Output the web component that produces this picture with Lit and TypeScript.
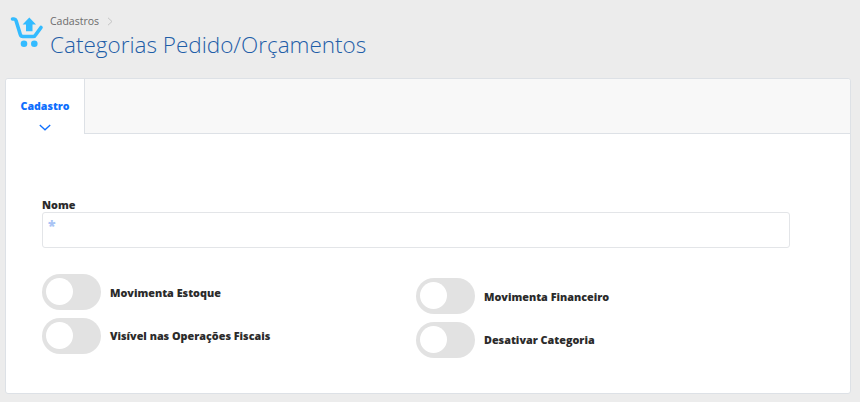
import { LitElement, html, css } from 'lit';
import { customElement } from 'lit/decorators.js';

@customElement('app-root')
export class AppRoot extends LitElement {
  static styles = css`
    :host {
      display: block;
      height: 402px;
      background: #ececec;
      font-family: 'Open Sans', sans-serif;
      box-sizing: border-box;
      padding: 0 9px 8px 5px;
      overflow: hidden;
    }
    .head {
      display: flex;
      height: 78px;
      box-sizing: border-box;
      padding: 11px 0 0 5px;
      gap: 5px;
    }
    .cart {
      width: 35px;
      height: 36px;
      margin-top: 5px;
      flex: none;
    }
    .crumb {
      display: flex;
      align-items: center;
      gap: 8px;
      font-size: 10.5px;
      line-height: 20px;
      color: #6b6b6b;
    }
    .title {
      font-size: 22.5px;
      font-weight: 300;
      line-height: 28px;
      color: #1f5ea8;
    }
    .card {
      height: 316px;
      box-sizing: border-box;
      background: #fff;
      border: 1px solid #dde1e6;
      border-radius: 3px;
    }
    .tabs {
      display: flex;
      height: 54px;
      background: #f8f8f8;
      border-bottom: 1px solid #dde1e6;
      border-radius: 3px 3px 0 0;
    }
    .tab {
      width: 79px;
      height: 55px;
      box-sizing: border-box;
      background: #fff;
      border-right: 1px solid #dde1e6;
      border-radius: 3px 0 0 0;
      display: flex;
      flex-direction: column;
      align-items: center;
      padding-top: 18px;
      color: #0d6efd;
      font-size: 10.6px;
      font-weight: 800;
      line-height: 18px;
    }
    .tab svg {
      margin-top: 9px;
    }
    .form {
      padding: 64px 60px 0 36px;
    }
    .lbl {
      font-size: 10.8px;
      font-weight: 800;
      line-height: 14px;
      color: #2b2b2b;
    }
    .field {
      height: 36px;
      box-sizing: border-box;
      border: 1px solid #e3e5e8;
      border-radius: 3px;
      padding: 4px 5px;
      color: #a9c4f5;
      font-size: 14px;
      font-weight: 800;
      line-height: 18px;
    }
    .cols {
      display: grid;
      grid-template-columns: 1fr 1fr;
      margin-top: 26px;
    }
    .col {
      display: flex;
      flex-direction: column;
      gap: 8px;
    }
    .col.right {
      padding-top: 4px;
    }
    .row {
      display: flex;
      align-items: center;
      gap: 9px;
    }
    .row:first-child .lbl {
      padding-top: 2px;
    }
    .sw {
      width: 59px;
      height: 36px;
      box-sizing: border-box;
      padding: 4px;
      background: #e2e2e2;
      border-radius: 18px;
      flex: none;
    }
    .sw::before {
      content: '';
      display: block;
      width: 27px;
      height: 27px;
      border-radius: 50%;
      background: #fff;
    }
  `;

  renderToggle(label: string) {
    return html`<div class="row"><div class="sw"></div><span class="lbl">${label}</span></div>`;
  }

  render() {
    return html`
      <div class="head">
        <svg class="cart" viewBox="0 0 35 36" fill="none">
          <path d="M2.500 3h1.500c1 0 1.700.6 2 1.500l4.300 14c.4 1.300 1.300 2 2.600 2h10.200c1.200 0 2.100-.6 2.600-1.700L31 11.500" stroke="#33bbff" stroke-width="3.600" stroke-linecap="round" stroke-linejoin="round"/>
          <path d="M19.300 1.500 26 8.500h-3.500v6.800H16V8.500h-3.400z" fill="#33bbff"/>
          <circle cx="14" cy="27.800" r="3.300" fill="#33bbff"/>
          <circle cx="24.300" cy="27.800" r="3.300" fill="#33bbff"/>
        </svg>
        <div>
          <div class="crumb">
            <span>Cadastros</span>
            <svg width="6" height="9" viewBox="0 0 6 9" fill="none"><path d="M1 .8 5 4.500 1 8.200" stroke="#c4c4c4"/></svg>
          </div>
          <div class="title">Categorias Pedido/Orçamentos</div>
        </div>
      </div>
      <div class="card">
        <div class="tabs">
          <div class="tab">
            <span>Cadastro</span>
            <svg width="12" height="7" viewBox="0 0 12 7" fill="none"><path d="M.8 1 6 5.800 11.200 1" stroke="#0d6efd" stroke-width="1.300"/></svg>
          </div>
        </div>
        <div class="form">
          <div class="lbl">Nome</div>
          <div class="field">*</div>
          <div class="cols">
            <div class="col">
              ${this.renderToggle('Movimenta Estoque')}
              ${this.renderToggle('Visível nas Operações Fiscais')}
            </div>
            <div class="col right">
              ${this.renderToggle('Movimenta Financeiro')}
              ${this.renderToggle('Desativar Categoria')}
            </div>
          </div>
        </div>
      </div>
    `;
  }
}
